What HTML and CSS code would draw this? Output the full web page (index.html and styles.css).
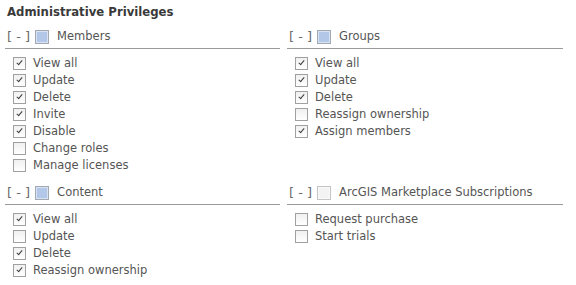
FILE: index.html
```html
<!DOCTYPE html>
<html lang="en">
<head>
    <meta charset="UTF-8">
    <title>Administrative Privileges</title>
    <link rel="stylesheet" href="styles.css">
</head>
<body>
    <h2 class="title">Administrative Privileges</h2>
    <div class="priv-grid">
        <div class="section">
            <div class="section-head">
                <span class="toggle">[ - ]</span>
                <span class="head-box"></span>
                <span>Members</span>
            </div>
            <ul class="items">
                <li><span class="box checked"></span>View all</li>
                <li><span class="box checked"></span>Update</li>
                <li><span class="box checked"></span>Delete</li>
                <li><span class="box checked"></span>Invite</li>
                <li><span class="box checked"></span>Disable</li>
                <li><span class="box"></span>Change roles</li>
                <li><span class="box"></span>Manage licenses</li>
            </ul>
        </div>
        <div class="section">
            <div class="section-head">
                <span class="toggle">[ - ]</span>
                <span class="head-box"></span>
                <span>Groups</span>
            </div>
            <ul class="items">
                <li><span class="box checked"></span>View all</li>
                <li><span class="box checked"></span>Update</li>
                <li><span class="box checked"></span>Delete</li>
                <li><span class="box"></span>Reassign ownership</li>
                <li><span class="box checked"></span>Assign members</li>
            </ul>
        </div>
        <div class="section">
            <div class="section-head">
                <span class="toggle">[ - ]</span>
                <span class="head-box"></span>
                <span>Content</span>
            </div>
            <ul class="items">
                <li><span class="box checked"></span>View all</li>
                <li><span class="box"></span>Update</li>
                <li><span class="box checked"></span>Delete</li>
                <li><span class="box checked"></span>Reassign ownership</li>
            </ul>
        </div>
        <div class="section">
            <div class="section-head">
                <span class="toggle">[ - ]</span>
                <span class="head-box empty"></span>
                <span>ArcGIS Marketplace Subscriptions</span>
            </div>
            <ul class="items">
                <li><span class="box"></span>Request purchase</li>
                <li><span class="box"></span>Start trials</li>
            </ul>
        </div>
    </div>
</body>
</html>
```

FILE: styles.css
```css
body {
    margin: 0;
    padding: 4px 0 0 5px;
    font-family: "DejaVu Sans", Verdana, sans-serif;
    font-size: 11.5px;
    color: #555;
    background: #fff;
}
.title {
    margin: 0 0 3px 2px;
    font-size: 11.7px;
    line-height: 17px;
    font-weight: bold;
    color: #3a3a3a;
}
.priv-grid {
    display: grid;
    grid-template-columns: 275px 276px;
    column-gap: 7px;
    row-gap: 6px;
    align-items: start;
}
.section-head {
    display: flex;
    align-items: center;
    padding: 4px 0 3px 2px;
    line-height: 17px;
    border-bottom: 1px solid #9a9a9a;
}
.toggle {
    color: #6a6a6a;
    font-size: 13px;
    margin-right: 5px;
    white-space: pre;
}
.head-box {
    width: 12px;
    height: 12px;
    border: 1px solid #a3a9b3;
    background: #b3c8e8;
    box-shadow: inset 0 0 0 1px #d8e2f3;
    margin-right: 8px;
}
.head-box.empty {
    border-color: #c4c4c4;
    background: #f3f3f3;
    box-shadow: inset 0 0 0 1px #fafafa;
}
.items {
    list-style: none;
    margin: 0;
    padding: 6px 0 0 8px;
}
.items li {
    display: flex;
    align-items: center;
    height: 17px;
    line-height: 17px;
}
.box {
    position: relative;
    width: 11px;
    height: 11px;
    border: 1px solid #a0a0a0;
    background: linear-gradient(#f0f0f0, #fff);
    margin-right: 7px;
}
.box.checked::after {
    content: "";
    position: absolute;
    left: 4px;
    top: 1px;
    width: 2px;
    height: 5px;
    border: solid #3c3c3c;
    border-width: 0 1.5px 1.5px 0;
    transform: rotate(40deg);
}
```
